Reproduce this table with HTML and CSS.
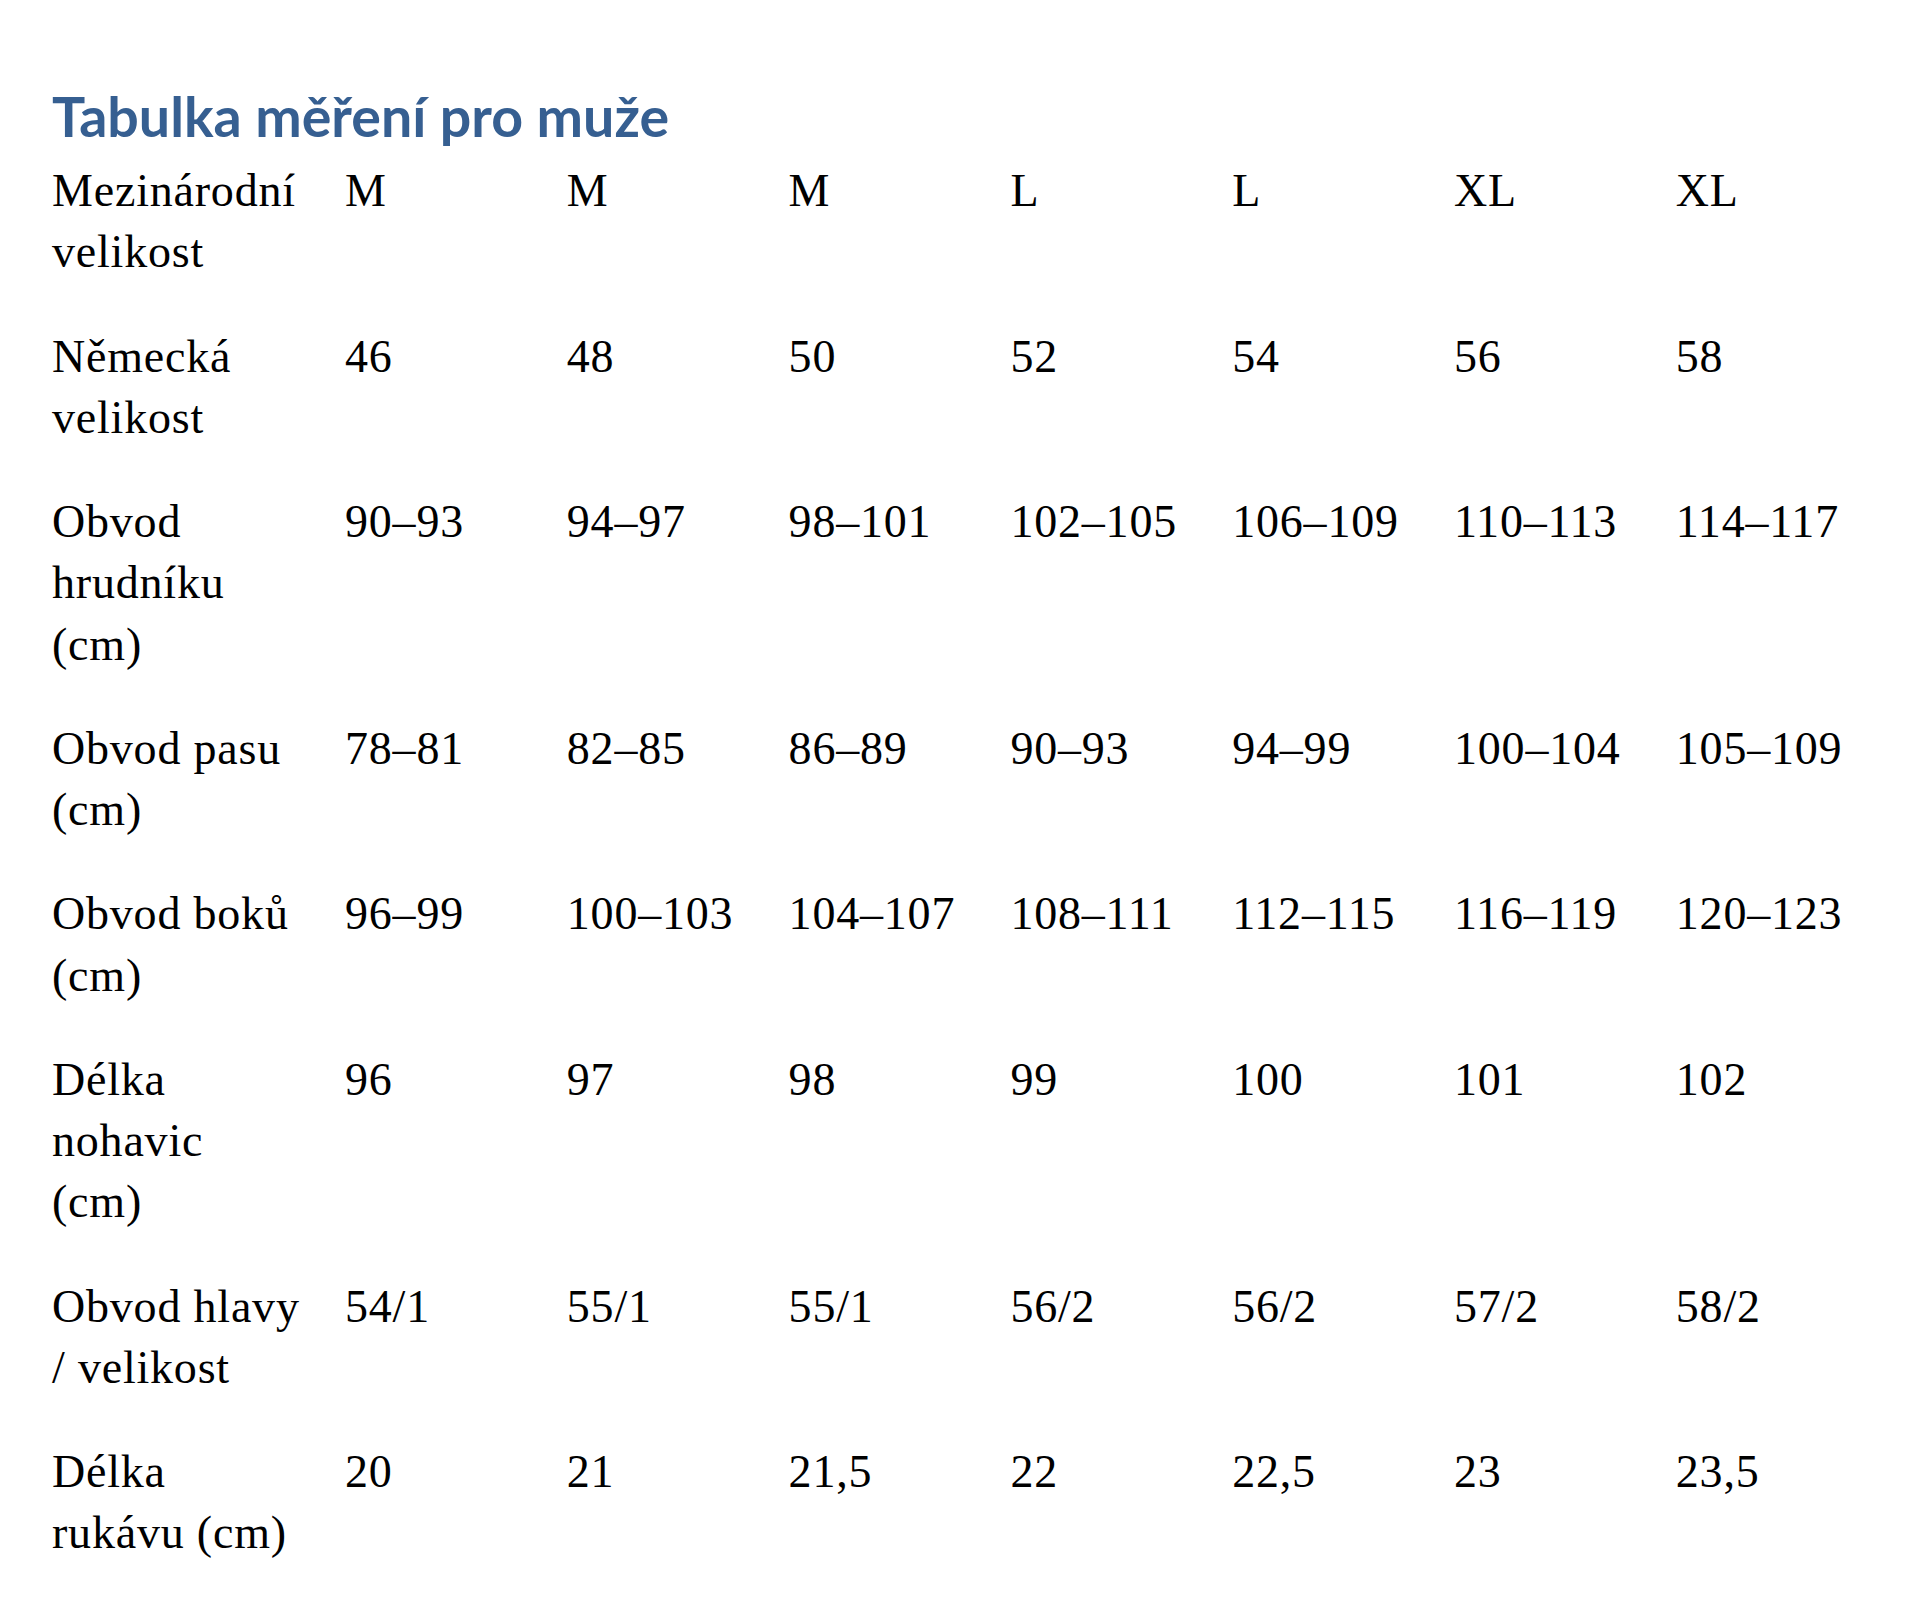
FILE: index.html
```html
<!DOCTYPE html>
<html lang="cs">
<head>
<meta charset="utf-8">
<title>Tabulka měření pro muže</title>
<link rel="stylesheet" href="styles.css">
</head>
<body>
<main class="page">
  <h1 class="title">Tabulka měření pro muže</h1>
  <div class="table">
    <div class="row">
      <div class="cell label">Mezinárodní<br>velikost</div>
      <div class="cell">M</div><div class="cell">M</div><div class="cell">M</div><div class="cell">L</div><div class="cell">L</div><div class="cell">XL</div><div class="cell">XL</div>
    </div>
    <div class="row">
      <div class="cell label">Německá<br>velikost</div>
      <div class="cell">46</div><div class="cell">48</div><div class="cell">50</div><div class="cell">52</div><div class="cell">54</div><div class="cell">56</div><div class="cell">58</div>
    </div>
    <div class="row">
      <div class="cell label">Obvod<br>hrudníku<br>(cm)</div>
      <div class="cell">90–93</div><div class="cell">94–97</div><div class="cell">98–101</div><div class="cell">102–105</div><div class="cell">106–109</div><div class="cell">110–113</div><div class="cell">114–117</div>
    </div>
    <div class="row">
      <div class="cell label">Obvod pasu<br>(cm)</div>
      <div class="cell">78–81</div><div class="cell">82–85</div><div class="cell">86–89</div><div class="cell">90–93</div><div class="cell">94–99</div><div class="cell">100–104</div><div class="cell">105–109</div>
    </div>
    <div class="row">
      <div class="cell label">Obvod boků<br>(cm)</div>
      <div class="cell">96–99</div><div class="cell">100–103</div><div class="cell">104–107</div><div class="cell">108–111</div><div class="cell">112–115</div><div class="cell">116–119</div><div class="cell">120–123</div>
    </div>
    <div class="row">
      <div class="cell label">Délka<br>nohavic<br>(cm)</div>
      <div class="cell">96</div><div class="cell">97</div><div class="cell">98</div><div class="cell">99</div><div class="cell">100</div><div class="cell">101</div><div class="cell">102</div>
    </div>
    <div class="row">
      <div class="cell label">Obvod hlavy<br>/ velikost</div>
      <div class="cell">54/1</div><div class="cell">55/1</div><div class="cell">55/1</div><div class="cell">56/2</div><div class="cell">56/2</div><div class="cell">57/2</div><div class="cell">58/2</div>
    </div>
    <div class="row">
      <div class="cell label">Délka<br>rukávu (cm)</div>
      <div class="cell">20</div><div class="cell">21</div><div class="cell">21,5</div><div class="cell">22</div><div class="cell">22,5</div><div class="cell">23</div><div class="cell">23,5</div>
    </div>
  </div>
</main>
</body>
</html>
```

FILE: styles.css
```css
html, body {
  margin: 0;
  padding: 0;
  background: #ffffff;
}

.page {
  padding: 83px 0 0 52px;
}

.title {
  margin: 0 0 11px 0;
  font-family: Lato, "Open Sans", sans-serif;
  font-weight: 700;
  font-size: 55.5px;
  line-height: 66px;
  color: #365f91;
  letter-spacing: 0;
}

.table {
  display: grid;
  grid-template-columns: 293px repeat(7, 221.8px);
  font-family: "Liberation Serif", "Times New Roman", serif;
  font-size: 46px;
  line-height: 61.25px;
  letter-spacing: 0.8px;
  color: #000000;
}

.row {
  display: contents;
}

.cell {
  padding-bottom: 43px;
  white-space: nowrap;
}
```
